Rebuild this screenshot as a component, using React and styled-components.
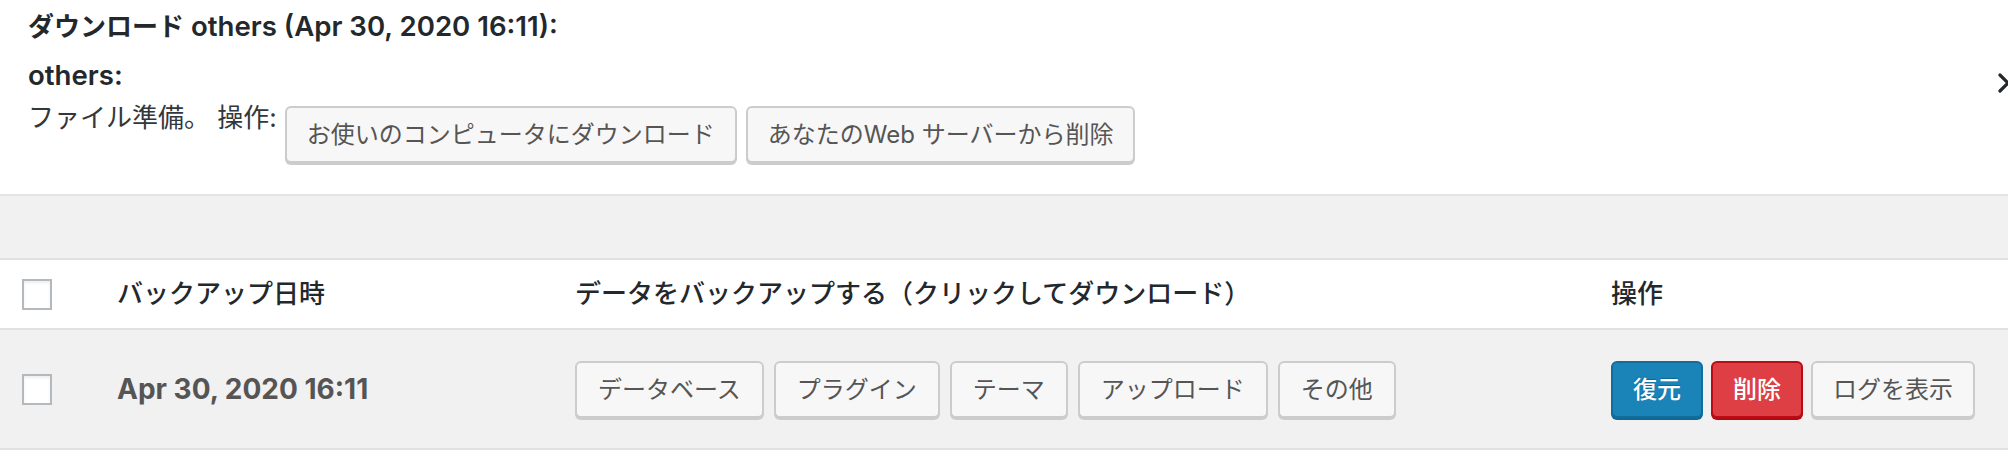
import React from "react";
import styled, { createGlobalStyle } from "styled-components";

const Global = createGlobalStyle`
  html, body { margin: 0; padding: 0; background: #f1f1f1; overflow: hidden; }
  body {
    font-family: "Inter", "Noto Sans CJK JP", sans-serif;
    color: #23282d;
    -webkit-font-smoothing: antialiased;
  }
`;

const Page = styled.div`
  width: 2008px;
  position: relative;
`;

const TopPanel = styled.section`
  position: relative;
  background: #fff;
  padding: 8px 28px 31px;
  border-bottom: 2px solid #e5e5e5;
`;

const Title = styled.div`
  font-size: 26px;
  line-height: 36px;
  font-weight: 600;
  color: #23282d;
`;

const Latin = styled.span`
  font-size: 27.6px;
`;

const FileName = styled.div`
  margin-top: 12px;
  font-size: 27.6px;
  line-height: 36px;
  font-weight: 600;
  color: #23282d;
`;

const ActionRow = styled.div`
  display: flex;
  align-items: flex-start;
  gap: 9px;
  margin-top: 7px;
`;

const Label = styled.span`
  font-size: 26px;
  line-height: 36px;
  color: #32373c;
  margin-right: -1px;
`;

const Button = styled.button`
  box-sizing: border-box;
  height: 57px;
  margin-top: ${(p) => p.$offset || 0}px;
  padding: 0 ${(p) => p.$pad || 21}px;
  font-family: "Inter", "Noto Sans CJK JP", sans-serif;
  font-size: 24px;
  line-height: 51px;
  border-radius: 6px;
  border: 2px solid #cccccc;
  background: #f7f7f7;
  color: #555;
  box-shadow: 0 2px 0 #cccccc;
  white-space: nowrap;
  cursor: pointer;
  ${(p) =>
    p.$variant === "primary" &&
    `
    background: #1a84b9;
    border-color: #136c9b;
    box-shadow: 0 2px 0 #0f6795;
    color: #fff;
    text-shadow: 0 -1px 1px #0f6795;
    font-weight: 500;
  `}
  ${(p) =>
    p.$variant === "danger" &&
    `
    background: #dd3f44;
    border-color: #bb0b14;
    box-shadow: 0 2px 0 #b2080f;
    color: #fff;
    font-weight: 500;
  `}
`;

const Close = styled.span`
  position: absolute;
  right: -10px;
  top: 73px;
  width: 20px;
  height: 20px;
  display: block;
`;

const Band = styled.div`
  height: 62px;
  background: #f1f1f1;
`;

const Grid = styled.div`
  display: grid;
  grid-template-columns: 117px 458px 1036px 1fr;
  align-items: center;
  box-sizing: border-box;
`;

const HeadRow = styled(Grid)`
  height: 72px;
  background: #fff;
  border-top: 2px solid #e1e1e1;
  border-bottom: 2px solid #e1e1e1;
`;

const BodyRow = styled(Grid)`
  height: 120px;
  background: #f1f1f1;
  border-bottom: 2px solid #e1e1e1;
`;

const CheckCell = styled.div`
  padding-left: 22px;
  display: flex;
  align-items: center;
`;

const Checkbox = styled.span`
  box-sizing: border-box;
  width: 30px;
  height: 31px;
  border: 2px solid #b4b9be;
  background: #fff;
  box-shadow: inset 0 2px 3px rgba(0, 0, 0, 0.07);
  display: block;
`;

const HeadCell = styled.div`
  font-size: 26px;
  font-weight: 500;
  color: #23282d;
  line-height: 36px;
`;

const DateCell = styled.div`
  font-size: 28px;
  font-weight: 700;
  color: #555;
  line-height: 36px;
`;

const ButtonGroup = styled.div`
  display: flex;
  gap: ${(p) => p.$gap || 10}px;
  align-items: center;
`;

function CloseIcon() {
  return (
    <svg width="20" height="20" viewBox="0 0 20 20">
      <path d="M2 2 L18 18 M18 2 L2 18" stroke="#23282d" strokeWidth="3.2" strokeLinecap="round" fill="none" />
    </svg>
  );
}

export default function App() {
  const parts = ["データベース", "プラグイン", "テーマ", "アップロード", "その他"];
  return (
    <Page>
      <Global />
      <TopPanel>
        <Title>
          ダウンロード<Latin> others (Apr 30, 2020 16:11):</Latin>
        </Title>
        <FileName>others:</FileName>
        <ActionRow>
          <Label>ファイル準備。 操作:</Label>
          <Button $offset={6} $pad={20}>お使いのコンピュータにダウンロード</Button>
          <Button $offset={6} $pad={20}>あなたのWeb サーバーから削除</Button>
        </ActionRow>
        <Close>
          <CloseIcon />
        </Close>
      </TopPanel>
      <Band />
      <HeadRow>
        <CheckCell>
          <Checkbox />
        </CheckCell>
        <HeadCell>バックアップ日時</HeadCell>
        <HeadCell>データをバックアップする（クリックしてダウンロード）</HeadCell>
        <HeadCell>操作</HeadCell>
      </HeadRow>
      <BodyRow>
        <CheckCell>
          <Checkbox />
        </CheckCell>
        <DateCell>Apr 30, 2020 16:11</DateCell>
        <ButtonGroup>
          {parts.map((p) => (
            <Button key={p}>{p}</Button>
          ))}
        </ButtonGroup>
        <ButtonGroup $gap={8}>
          <Button $variant="primary" $pad={20}>復元</Button>
          <Button $variant="danger" $pad={20}>削除</Button>
          <Button $pad={20}>ログを表示</Button>
        </ButtonGroup>
      </BodyRow>
    </Page>
  );
}
